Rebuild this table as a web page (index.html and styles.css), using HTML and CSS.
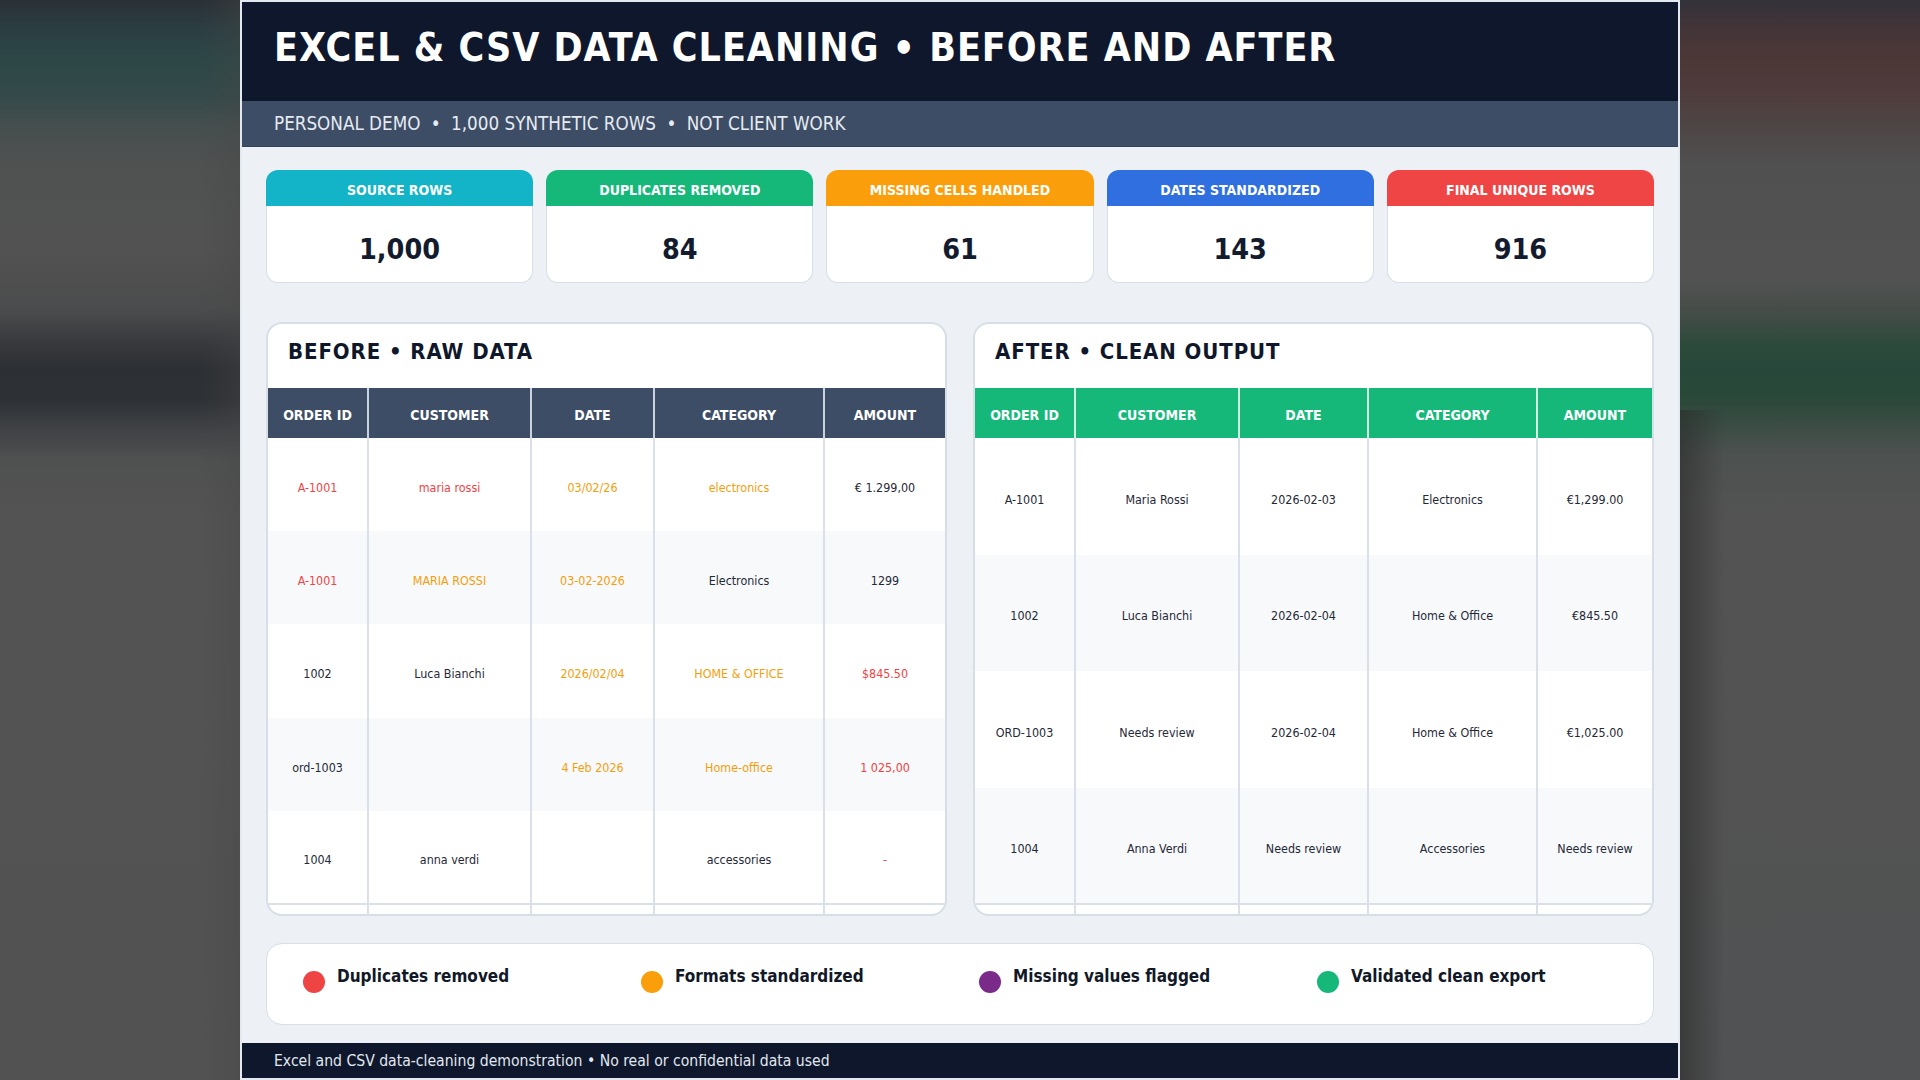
FILE: index.html
```html
<!DOCTYPE html>
<html lang="en">
<head>
<meta charset="utf-8">
<title>Excel &amp; CSV Data Cleaning • Before and After</title>
<link rel="stylesheet" href="styles.css">
</head>
<body>
<div class="side side-left"></div>
<main class="panel">
  <header class="hero">
    <h1 class="hero-title">EXCEL &amp; CSV DATA CLEANING • BEFORE AND AFTER</h1>
  </header>
  <div class="subbar">PERSONAL DEMO <span class="sep">•</span> 1,000 SYNTHETIC ROWS <span class="sep">•</span> NOT CLIENT WORK</div>

  <div class="content">
    <section class="stats">
      <div class="stat">
        <div class="stat-head teal">SOURCE ROWS</div>
        <div class="stat-body">1,000</div>
      </div>
      <div class="stat">
        <div class="stat-head green">DUPLICATES REMOVED</div>
        <div class="stat-body">84</div>
      </div>
      <div class="stat">
        <div class="stat-head orange">MISSING CELLS HANDLED</div>
        <div class="stat-body">61</div>
      </div>
      <div class="stat">
        <div class="stat-head blue">DATES STANDARDIZED</div>
        <div class="stat-body">143</div>
      </div>
      <div class="stat">
        <div class="stat-head red">FINAL UNIQUE ROWS</div>
        <div class="stat-body">916</div>
      </div>
    </section>

    <section class="tables">
      <div class="tcard">
        <h2 class="tcard-title">BEFORE • RAW DATA</h2>
        <table class="grid grid-before">
          <colgroup>
            <col class="b1"><col class="b2"><col class="b3"><col class="b4"><col class="b5">
          </colgroup>
          <thead>
            <tr><th>ORDER ID</th><th>CUSTOMER</th><th>DATE</th><th>CATEGORY</th><th>AMOUNT</th></tr>
          </thead>
          <tbody>
            <tr class="row">
              <td class="bad">A-1001</td><td class="bad">maria rossi</td><td class="warn">03/02/26</td><td class="warn">electronics</td><td>€ 1.299,00</td>
            </tr>
            <tr class="row alt">
              <td class="bad">A-1001</td><td class="warn">MARIA ROSSI</td><td class="warn">03-02-2026</td><td>Electronics</td><td>1299</td>
            </tr>
            <tr class="row">
              <td>1002</td><td>Luca Bianchi</td><td class="warn">2026/02/04</td><td class="warn">HOME &amp; OFFICE</td><td class="bad">$845.50</td>
            </tr>
            <tr class="row alt">
              <td>ord-1003</td><td></td><td class="warn">4 Feb 2026</td><td class="warn">Home-office</td><td class="bad">1 025,00</td>
            </tr>
            <tr class="row">
              <td>1004</td><td>anna verdi</td><td></td><td>accessories</td><td class="bad">-</td>
            </tr>
            <tr class="tail"><td></td><td></td><td></td><td></td><td></td></tr>
          </tbody>
        </table>
      </div>

      <div class="tcard">
        <h2 class="tcard-title">AFTER • CLEAN OUTPUT</h2>
        <table class="grid grid-after">
          <colgroup>
            <col class="a1"><col class="a2"><col class="a3"><col class="a4"><col class="a5">
          </colgroup>
          <thead>
            <tr><th>ORDER ID</th><th>CUSTOMER</th><th>DATE</th><th>CATEGORY</th><th>AMOUNT</th></tr>
          </thead>
          <tbody>
            <tr class="row">
              <td>A-1001</td><td>Maria Rossi</td><td>2026-02-03</td><td>Electronics</td><td>€1,299.00</td>
            </tr>
            <tr class="row alt">
              <td>1002</td><td>Luca Bianchi</td><td>2026-02-04</td><td>Home &amp; Office</td><td>€845.50</td>
            </tr>
            <tr class="row">
              <td>ORD-1003</td><td>Needs review</td><td>2026-02-04</td><td>Home &amp; Office</td><td>€1,025.00</td>
            </tr>
            <tr class="row alt">
              <td>1004</td><td>Anna Verdi</td><td>Needs review</td><td>Accessories</td><td>Needs review</td>
            </tr>
            <tr class="tail"><td></td><td></td><td></td><td></td><td></td></tr>
          </tbody>
        </table>
      </div>
    </section>

    <section class="legend">
      <div class="legend-item"><span class="dot dot-red"></span><span class="legend-text">Duplicates removed</span></div>
      <div class="legend-item"><span class="dot dot-orange"></span><span class="legend-text">Formats standardized</span></div>
      <div class="legend-item"><span class="dot dot-purple"></span><span class="legend-text">Missing values flagged</span></div>
      <div class="legend-item"><span class="dot dot-green"></span><span class="legend-text">Validated clean export</span></div>
    </section>
  </div>

  <footer class="foot">Excel and CSV data-cleaning demonstration • No real or confidential data used</footer>
</main>
<div class="side side-right"></div>
</body>
</html>
```

FILE: styles.css
```css
* { box-sizing: border-box; }

html, body {
  margin: 0;
  padding: 0;
}

body {
  width: 1920px;
  height: 1080px;
  overflow: hidden;
  display: flex;
  background: #505152;
  font-family: "DejaVu Sans Condensed", "DejaVu Sans", sans-serif;
  font-stretch: semi-condensed;
}

/* blurred backdrop on both sides */
.side {
  width: 240px;
  height: 1080px;
  flex: none;
}

.side-left {
  background:
    linear-gradient(to right, rgba(60, 60, 60, 0) 0, rgba(60, 60, 60, 0) 200px, rgba(70, 70, 70, 0.35) 240px),
    linear-gradient(to bottom,
      #2a3036 0px, #2b3e42 30px, #2d4747 60px, #34494a 95px, #454e4e 125px,
      #4f5151 160px, #525252 250px, #4b4c4d 310px, #36383c 345px, #2c2f33 370px,
      #2e3135 400px, #404246 430px, #4f5050 460px, #535353 520px, #525252 1080px);
}

.side-right {
  background:
    linear-gradient(to right, rgba(40, 40, 40, 0.55) 0, rgba(40, 40, 40, 0) 45px) 0 410px / 100% 670px no-repeat,
    linear-gradient(to bottom,
      #33323a 0px, #413438 25px, #4c3737 55px, #4f3b3b 90px, #4e4545 125px,
      #505050 165px, #525252 280px, #434c47 315px, #2c4a3c 345px, #26473a 370px,
      #294839 395px, #3b4c44 425px, #4d5150 455px, #535353 520px, #515253 1080px);
}

/* main poster */
.panel {
  width: 1440px;
  height: 1080px;
  flex: none;
  display: flex;
  flex-direction: column;
  background: #edf1f6;
  border: 2px solid #e4e9f0;
}

.hero {
  height: 99px;
  flex: none;
  background: #0e172b;
  padding: 23px 0 0 32px;
}

.hero-title {
  margin: 0;
  color: #ffffff;
  font-weight: 700;
  font-size: 39px;
  line-height: 46px;
  letter-spacing: 0.97px;
}

.subbar {
  height: 46px;
  flex: none;
  display: flex;
  align-items: center;
  padding-left: 32px;
  background: #3d4d66;
  border-bottom: 1px solid #34425a;
  color: #e6ebf2;
  font-size: 18.7px;
  white-space: pre;
}

.sep {
  margin: 0 5px;
}

.content {
  flex: none;
  padding: 23px 24px 0;
}

/* stat cards */
.stats {
  display: grid;
  grid-template-columns: repeat(5, 1fr);
  column-gap: 13px;
  height: 113px;
}

.stat {
  display: flex;
  flex-direction: column;
}

.stat-head {
  height: 36px;
  flex: none;
  display: flex;
  align-items: center;
  justify-content: center;
  padding-top: 3px;
  border-radius: 12px 12px 0 0;
  color: #ffffff;
  font-weight: 700;
  font-size: 14px;
}

.stat-head.teal { background: #13b4c7; }
.stat-head.green { background: #16b87a; }
.stat-head.orange { background: #fb9e0c; }
.stat-head.blue { background: #2f6fe0; }
.stat-head.red { background: #ef4545; }

.stat-body {
  flex: 1;
  display: flex;
  align-items: center;
  justify-content: center;
  padding-top: 11px;
  background: #ffffff;
  border: 1px solid #d6dee8;
  border-top: 0;
  border-radius: 0 0 12px 12px;
  color: #131b2e;
  font-weight: 700;
  font-size: 28.5px;
}

/* tables */
.tables {
  margin-top: 39px;
  height: 594px;
  display: grid;
  grid-template-columns: 1fr 1fr;
  column-gap: 26px;
}

.tcard {
  display: flex;
  flex-direction: column;
  overflow: hidden;
  background: #ffffff;
  border: 2px solid #d6dee8;
  border-radius: 16px;
}

.tcard-title {
  margin: 0;
  height: 64px;
  flex: none;
  padding: 15px 0 0 20px;
  color: #0f172a;
  font-weight: 700;
  font-size: 22px;
  line-height: 26px;
  letter-spacing: 0.9px;
}

.grid {
  width: 100%;
  flex: none;
  border-collapse: collapse;
  table-layout: fixed;
}

.b1 { width: 100px; }
.b2 { width: 163px; }
.b3 { width: 123px; }
.b4 { width: 170px; }
.b5 { width: 121px; }

.a1 { width: 100px; }
.a2 { width: 164px; }
.a3 { width: 129px; }
.a4 { width: 169px; }
.a5 { width: 115px; }

.grid th {
  height: 50px;
  padding: 4px 0 0;
  background: #3d4d66;
  color: #ffffff;
  font-weight: 700;
  font-size: 14px;
  text-align: center;
  vertical-align: middle;
}

.grid th + th {
  border-left: 2px solid #c9d2dd;
}

.grid-after th {
  background: #16b87a;
}

.grid-after th + th {
  border-left: 2px solid #d3f0e3;
}

.grid td {
  padding: 6px 0 0;
  color: #1f2937;
  font-size: 12.4px;
  text-align: center;
  vertical-align: middle;
  white-space: nowrap;
}

.grid td + td {
  border-left: 2px solid #d9e0e9;
}

.grid-before .row { height: 93.2px; }
.grid-after .row { height: 116.5px; }

.grid .alt td {
  background: #f7f9fb;
}

.grid .tail td {
  height: 30px;
  border-top: 2px solid #d9e0e9;
}

.grid td.bad { color: #ef4444; }
.grid td.warn { color: #f59e0b; }

/* legend */
.legend {
  margin-top: 27px;
  height: 82px;
  display: flex;
  padding: 22px 0 0 36px;
  background: #ffffff;
  border: 1px solid #d6dee8;
  border-radius: 16px;
}

.legend-item {
  width: 338px;
  flex: none;
  display: flex;
  align-items: flex-start;
  column-gap: 12px;
}

.dot {
  width: 22px;
  height: 22px;
  flex: none;
  margin-top: 5px;
  border-radius: 50%;
}

.dot-red { background: #ef4444; }
.dot-orange { background: #fb9e0c; }
.dot-purple { background: #7a2b8a; }
.dot-green { background: #16b87a; }

.legend-text {
  color: #111827;
  font-weight: 700;
  font-size: 17px;
  line-height: 20px;
}

/* footer */
.foot {
  margin-top: 18px;
  height: 35px;
  flex: none;
  display: flex;
  align-items: center;
  padding-left: 32px;
  background: #0e172b;
  color: #e2e8f0;
  font-size: 15.6px;
}
```
